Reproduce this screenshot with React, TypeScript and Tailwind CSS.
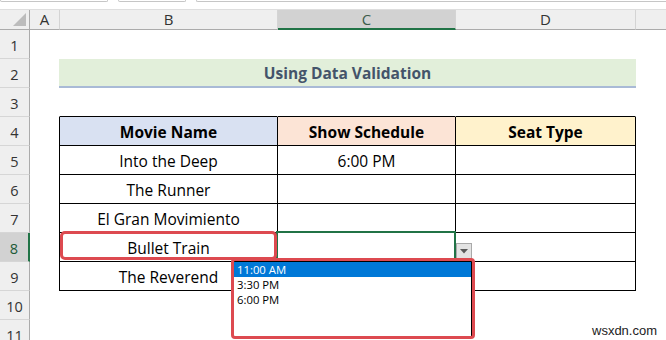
import { FC, ReactNode } from "react";

const CELL_FONT = { fontFamily: '"Open Sans", "Noto Sans", sans-serif' };

type Row = {
  n: number;
  b?: ReactNode;
  c?: ReactNode;
  d?: ReactNode;
  kind?: "blank" | "title" | "top" | "head" | "data";
};

const rows: Row[] = [
  { n: 1, kind: "blank" },
  { n: 2, kind: "title" },
  { n: 3, kind: "top" },
  { n: 4, kind: "head", b: "Movie Name", c: "Show Schedule", d: "Seat Type" },
  { n: 5, kind: "data", b: "Into the Deep", c: "6:00 PM" },
  { n: 6, kind: "data", b: "The Runner" },
  { n: 7, kind: "data", b: "El Gran Movimiento" },
  { n: 8, kind: "data", b: "Bullet Train" },
  { n: 9, kind: "data", b: "The Reverend" },
  { n: 10, kind: "blank" },
  { n: 11, kind: "blank" },
];

const RowHeader: FC<{ n: number }> = ({ n }) => {
  const active = n === 8;
  return (
    <div
      className={[
        "flex h-full w-[30px] shrink-0 items-center justify-center border-b border-b-[#d6d6d6] pt-[3px] text-[14.5px]",
        active
          ? "bg-[#d2d2d2] border-r-2 border-r-[#217346] text-[#1d5b38]"
          : "bg-[#efefef] border-r border-r-[#ababab] text-[#333]",
      ].join(" ")}
    >
      {n}
    </div>
  );
};

const SheetRow: FC<{ row: Row }> = ({ row }) => {
  const inTable = row.kind === "head" || row.kind === "data";
  const edge = inTable ? "border-black" : "border-transparent";
  const bottom =
    row.kind === "top" || inTable ? "border-b-black" : "border-b-transparent";

  const headBg = row.kind === "head";

  return (
    <div className="flex h-[29px] items-stretch">
      <RowHeader n={row.n} />
      <div className="w-[29px] shrink-0" />
      {row.kind === "title" ? (
        <div className="flex w-[577px] shrink-0 items-center justify-center border-b-2 border-b-[#a9bad6] bg-[#e2efda] pt-[3px] text-[15.5px] font-bold text-[#44546a]">
          Using Data Validation
        </div>
      ) : (
        <>
          <div
            className={[
              "flex w-[219px] shrink-0 items-center justify-center border-l border-r border-b pt-[3px] text-[15.5px] text-black",
              edge,
              bottom,
              headBg ? "bg-[#d9e1f2] font-bold" : "",
            ].join(" ")}
          >
            {row.b}
          </div>
          <div
            className={[
              "flex w-[178px] shrink-0 items-center justify-center border-r border-b pt-[3px] text-[15.5px] text-black",
              edge,
              bottom,
              headBg ? "bg-[#fce4d6] font-bold" : "",
            ].join(" ")}
          >
            {row.c}
          </div>
          <div
            className={[
              "flex w-[180px] shrink-0 items-center justify-center border-r border-b pt-[3px] text-[15.5px] text-black",
              edge,
              bottom,
              headBg ? "bg-[#fff2cc] font-bold" : "",
            ].join(" ")}
          >
            {row.d}
          </div>
        </>
      )}
      <div className="flex-1" />
    </div>
  );
};

export default function App() {
  return (
    <div
      className="relative h-[340px] w-[666px] overflow-hidden bg-white"
      style={CELL_FONT}
    >
      {/* formula bar edges peeking in at the top */}
      <div className="flex h-[9px] items-start gap-[24px]">
        <div className="h-[2px] w-[108px] rounded-b-[3px] border-x border-b border-[#c6c6c6]" />
        <div className="-ml-[14px] h-[2px] w-[68px] rounded-b-[3px] border-x border-b border-[#c6c6c6]" />
        <div className="-ml-[14px] h-[2px] flex-1 rounded-bl-[3px] border-l border-b border-[#c6c6c6]" />
      </div>

      {/* column headers */}
      <div className="flex h-[21px] border-t border-t-[#dedede] bg-[#efefef] text-[15px] text-[#333]">
        <div className="relative w-[30px] shrink-0 border-r border-b border-[#ababab]">
          <svg className="absolute right-[3px] bottom-[3px]" width="13" height="13" viewBox="0 0 13 13">
            <polygon points="13,0 13,13 0,13" fill="#bcbcbc" />
          </svg>
        </div>
        <div className="flex w-[30px] shrink-0 items-center justify-center border-r border-b border-r-[#d4d4d4] border-b-[#ababab]">
          A
        </div>
        <div className="flex w-[218px] shrink-0 items-center justify-center border-r border-b border-r-[#d4d4d4] border-b-[#ababab]">
          B
        </div>
        <div className="flex w-[178px] shrink-0 items-center justify-center border-r border-r-[#d4d4d4] border-b-2 border-b-[#217346] bg-[#d2d2d2] text-[#3d5c49]">
          C
        </div>
        <div className="flex w-[180px] shrink-0 items-center justify-center border-r border-b border-r-[#d4d4d4] border-b-[#ababab]">
          D
        </div>
        <div className="flex-1 border-b border-b-[#ababab]" />
      </div>

      {rows.map((r) => (
        <SheetRow key={r.n} row={r} />
      ))}

      {/* active cell C8 */}
      <div className="absolute left-[276px] top-[231px] h-[31px] w-[180px] border-2 border-[#217346]" />

      {/* highlight around B8 */}
      <div className="absolute left-[60px] top-[231px] h-[29px] w-[217px] rounded-[5px] border-[3px] border-[#dd4a50]" />

      {/* dropdown arrow button */}
      <div className="absolute left-[456px] top-[243px] flex h-[16px] w-[16px] items-center justify-center border border-[#a9a9a9] bg-[#e3e3e3]">
        <svg width="8" height="5" viewBox="0 0 8 5">
          <polygon points="0,0 8,0 4,4.5" fill="#595959" />
        </svg>
      </div>

      {/* validation list */}
      <div className="absolute left-[233px] top-[261px] flex h-[76px] w-[239px] flex-col border border-black bg-white text-[11.3px] leading-[15px] text-black">
        <div className="bg-[#0078d7] px-[3px] text-white">11:00 AM</div>
        <div className="px-[3px]">3:30 PM</div>
        <div className="px-[3px]">6:00 PM</div>
      </div>
      <div className="absolute left-[231px] top-[258px] h-[81px] w-[244px] rounded-[4px] border-[3px] border-[#dd4a50]" />

      <div
        className="absolute left-[592px] top-[321px] text-[13px] text-[#222]"
        style={{ fontFamily: '"Liberation Sans", Arial, sans-serif' }}
      >
        wsxdn.com
      </div>
    </div>
  );
}
